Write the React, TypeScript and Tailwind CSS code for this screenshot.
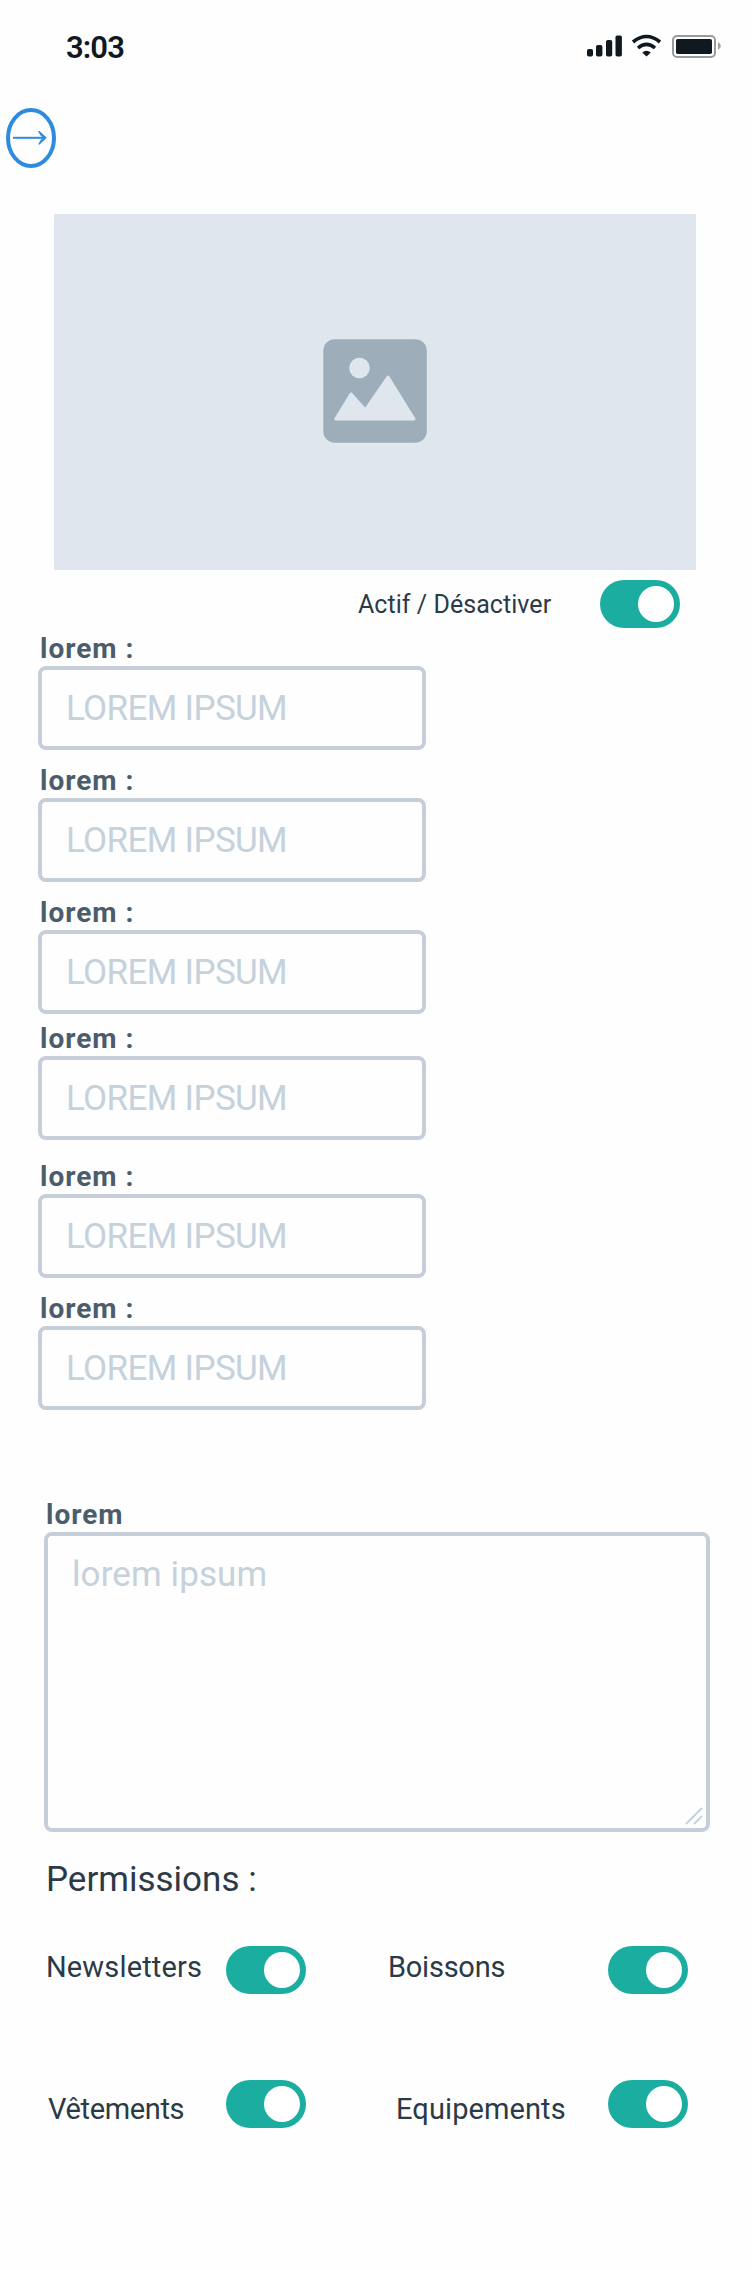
function Toggle() {
  return (
    <button type="button" role="switch" aria-checked="true" className="flex h-12 w-20 shrink-0 items-center justify-end rounded-full bg-[#1baea0] pr-1.5">
      <span className="size-9 rounded-full bg-white" />
    </button>
  );
}

function Field({ className }: { className: string }) {
  return (
    <div className={className}>
      <div className="mb-px pt-px pl-[2px] text-[28px] leading-8 font-bold tracking-[1px] text-[#4b5d6b]">lorem :</div>
      <div className="flex h-[84px] w-[388px] items-center rounded-lg border-4 border-[#c5ced9] pt-[2px] pl-6 text-[35px] leading-10 tracking-[-0.65px] text-[#c5d1db]">
        LOREM IPSUM
      </div>
    </div>
  );
}

const fieldGaps = ["mt-1", "mt-3.5", "mt-3.5", "mt-2", "mt-5", "mt-3.5"];

function StatusIcons() {
  return (
    <svg width="136" height="24" viewBox="586 34 136 24" fill="#101820">
      <rect x="587" y="49" width="6" height="7.5" rx="1.8" />
      <rect x="596" y="45" width="6.4" height="11.5" rx="1.8" />
      <rect x="606" y="40" width="6.2" height="16.5" rx="1.8" />
      <rect x="615.5" y="35.5" width="6.4" height="21" rx="1.8" />
      <path d="M633 42Q646.5 31 660 42M638 48Q646.5 40.8 655 48" fill="none" stroke="#101820" strokeWidth="3.6" />
      <path d="M642.2 52.500Q646.5 49 650.8 52.500L646.5 56.5Z" />
      <rect x="673" y="36" width="42" height="21" rx="4" fill="none" stroke="#999b9d" strokeWidth="2" />
      <rect x="676" y="39" width="36" height="15" rx="1.8" />
      <path d="M718 42Q720.8 43.5 720.8 46T718 50Z" fill="#a0a1a3" />
    </svg>
  );
}

export default function App() {
  return (
    <main className="h-[2270px] w-[752px] overflow-hidden bg-[#fefefe] font-[Roboto,sans-serif] whitespace-nowrap text-[#2c3a47]">
      <header className="flex h-[108px] items-start justify-between pt-[34px] pr-[30px] pl-[66px]">
        <div className="-mt-1 text-[31px] leading-9 font-semibold tracking-[-0.9px] text-[#101820]">3:03</div>
        <StatusIcons />
      </header>
      <svg className="ml-1.5 block" width="50" height="60" viewBox="0 0 50 60" fill="none" stroke="#2e8bde">
        <ellipse cx="25" cy="30" rx="23" ry="28" strokeWidth="4" />
        <path d="M7 29.8H39" strokeWidth="2" />
        <path d="M32 23Q33.8 27.8 37 29.8Q33.800 31.8 32 36.5L33.500 36.5L40.8 29.8L33.5 23Z" fill="#2e8bde" stroke="none" />
      </svg>
      <div className="mt-[46px] ml-[54px] flex h-[356px] w-[642px] items-center justify-center bg-[#dfe6ee]">
        <svg width="104" height="104" viewBox="0 0 104 104" className="-mt-0.5">
          <rect x="0.3" y="0.2" width="103.5" height="103.5" rx="11.5" fill="#9eadba" />
          <circle cx="36.5" cy="29" r="10.3" fill="#dfe6ee" />
          <path d="M12.8 80L28 55L42.3 71L65 38L91 80Z" fill="#dfe6ee" stroke="#dfe6ee" strokeWidth="3" strokeLinejoin="round" />
        </svg>
      </div>
      <div className="mt-2.5 flex h-12 items-center justify-between pr-[72px] pl-[358px]">
        <span className="pt-[2px] text-[25px] leading-8 tracking-[0.05px]">Actif / Désactiver</span>
        <Toggle />
      </div>
      <section className="ml-[38px]">
        {fieldGaps.map((gap, i) => (
          <Field key={i} className={gap} />
        ))}
      </section>
      <section className="mt-[88px] ml-11 w-[666px]">
        <div className="mb-px pt-px pl-[2px] text-[28px] leading-8 font-bold tracking-[1px] text-[#4b5d6b]">lorem</div>
        <div className="flex h-[300px] items-start justify-between rounded-lg border-4 border-[#c5ced9] pt-[19px] pl-6 text-[35px] leading-10 tracking-[0.1px] text-[#c5d1db]">
          lorem ipsum
          <svg width="18" height="18" viewBox="0 0 18 18" className="mr-[3px] mb-[3px] self-end" fill="none" stroke="#c5d1db" strokeWidth="2">
            <path d="M1 17L17 1M9 17L17 9" />
          </svg>
        </div>
      </section>
      <section className="pr-16 pl-[46px]">
        <h2 className="mt-[28px] text-[35px] leading-10">Permissions :</h2>
        <div className="mt-[46px] grid h-12 grid-cols-[180px_162px_220px_80px] items-start">
          <span className="text-[29px] leading-[42px] tracking-[0.15px]">Newsletters</span>
          <Toggle />
          <span className="text-[29px] leading-[42px] tracking-[-0.25px]">Boissons</span>
          <Toggle />
        </div>
        <div className="mt-[86px] grid h-12 grid-cols-[180px_170px_212px_80px] items-start">
          <span className="pt-2 pl-[2px] text-[29px] leading-[42px] tracking-[-0.35px]">Vêtements</span>
          <Toggle />
          <span className="pt-2 text-[29px] leading-[42px] tracking-[0.1px]">Equipements</span>
          <Toggle />
        </div>
      </section>
    </main>
  );
}
